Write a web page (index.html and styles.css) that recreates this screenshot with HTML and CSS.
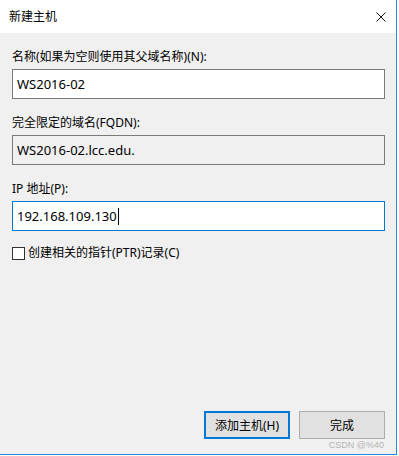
FILE: index.html
```html
<!DOCTYPE html>
<html lang="zh-CN">
<head>
    <meta charset="UTF-8">
    <title>新建主机</title>
    <link rel="stylesheet" href="styles.css">
</head>
<body>
  <div class="dialog">
    <div class="titlebar">
      <span class="title">新建主机</span>
      <svg class="close" width="10" height="10" viewBox="0 0 10 10">
        <path d="M0.5 0.5 L9.5 9.5 M9.5 0.5 L0.5 9.5" stroke="#111" stroke-width="1" fill="none"/>
      </svg>
    </div>

    <div class="content">
      <div class="label">名称(如果为空则使用其父域名称)(N):</div>
      <div class="field">WS2016-02</div>

      <div class="label">完全限定的域名(FQDN):</div>
      <div class="field readonly">WS2016-02.lcc.edu.</div>

      <div class="label">IP 地址(P):</div>
      <div class="field focused">192.168.109.130<span class="caret"></span></div>

      <div class="check">
        <span class="box"></span>
        <span>创建相关的指针(PTR)记录(C)</span>
      </div>

      <div class="buttons">
        <div class="btn default">添加主机(H)</div>
        <div class="btn">完成</div>
      </div>
    </div>

    <div class="mark">CSDN @%40</div>
  </div>
</body>
</html>
```

FILE: styles.css
```css
body{
    margin: 0;
    background-color: #ffffff;
    font-family: "Noto Sans", "Noto Sans CJK SC", sans-serif;
    font-size: 12px;
    color: #000;
}
.dialog{
    position: relative;
    width: 396px;
    height: 454px;
    border-right: 1px solid #2a86d8;
    border-bottom: 1px solid #2a86d8;
    background-color: #f0f0f0;
    display: flex;
    flex-direction: column;
}
.titlebar{
    height: 33px;
    background-color: #ffffff;
    display: flex;
    align-items: center;
    justify-content: space-between;
    padding: 0 10px 0 9px;
}
.title{
    line-height: 16px;
}
.content{
    flex: 1;
    display: flex;
    flex-direction: column;
    padding: 16px 11px 15px 12px;
}
.label{
    line-height: 16px;
    margin-bottom: 4px;
}
.field{
    height: 28px;
    border: 1px solid #7a7a7a;
    background-color: #ffffff;
    display: flex;
    align-items: center;
    padding-left: 4px;
    margin-bottom: 16px;
    font-size: 13px;
}
.field.readonly{
    background-color: #f0f0f0;
}
.field.focused{
    border-color: #0078d7;
    margin-bottom: 14px;
}
.caret{
    width: 1px;
    height: 17px;
    background-color: #000;
    margin-left: 1px;
}
.check{
    display: flex;
    align-items: center;
    line-height: 16px;
}
.box{
    width: 11px;
    height: 11px;
    border: 1px solid #333;
    background-color: #fff;
    margin-right: 3px;
}
.buttons{
    margin-top: auto;
    display: flex;
    justify-content: flex-end;
    gap: 9px;
}
.btn{
    width: 84px;
    height: 26px;
    border: 1px solid #adadad;
    background-color: #e1e1e1;
    display: flex;
    align-items: center;
    justify-content: center;
}
.btn.default{
    width: 82px;
    height: 24px;
    border: 2px solid #0078d7;
}
.mark{
    position: absolute;
    right: 12px;
    bottom: 4px;
    font-size: 9px;
    color: #b4b4b4;
    font-family: "Liberation Sans", sans-serif;
}
```
